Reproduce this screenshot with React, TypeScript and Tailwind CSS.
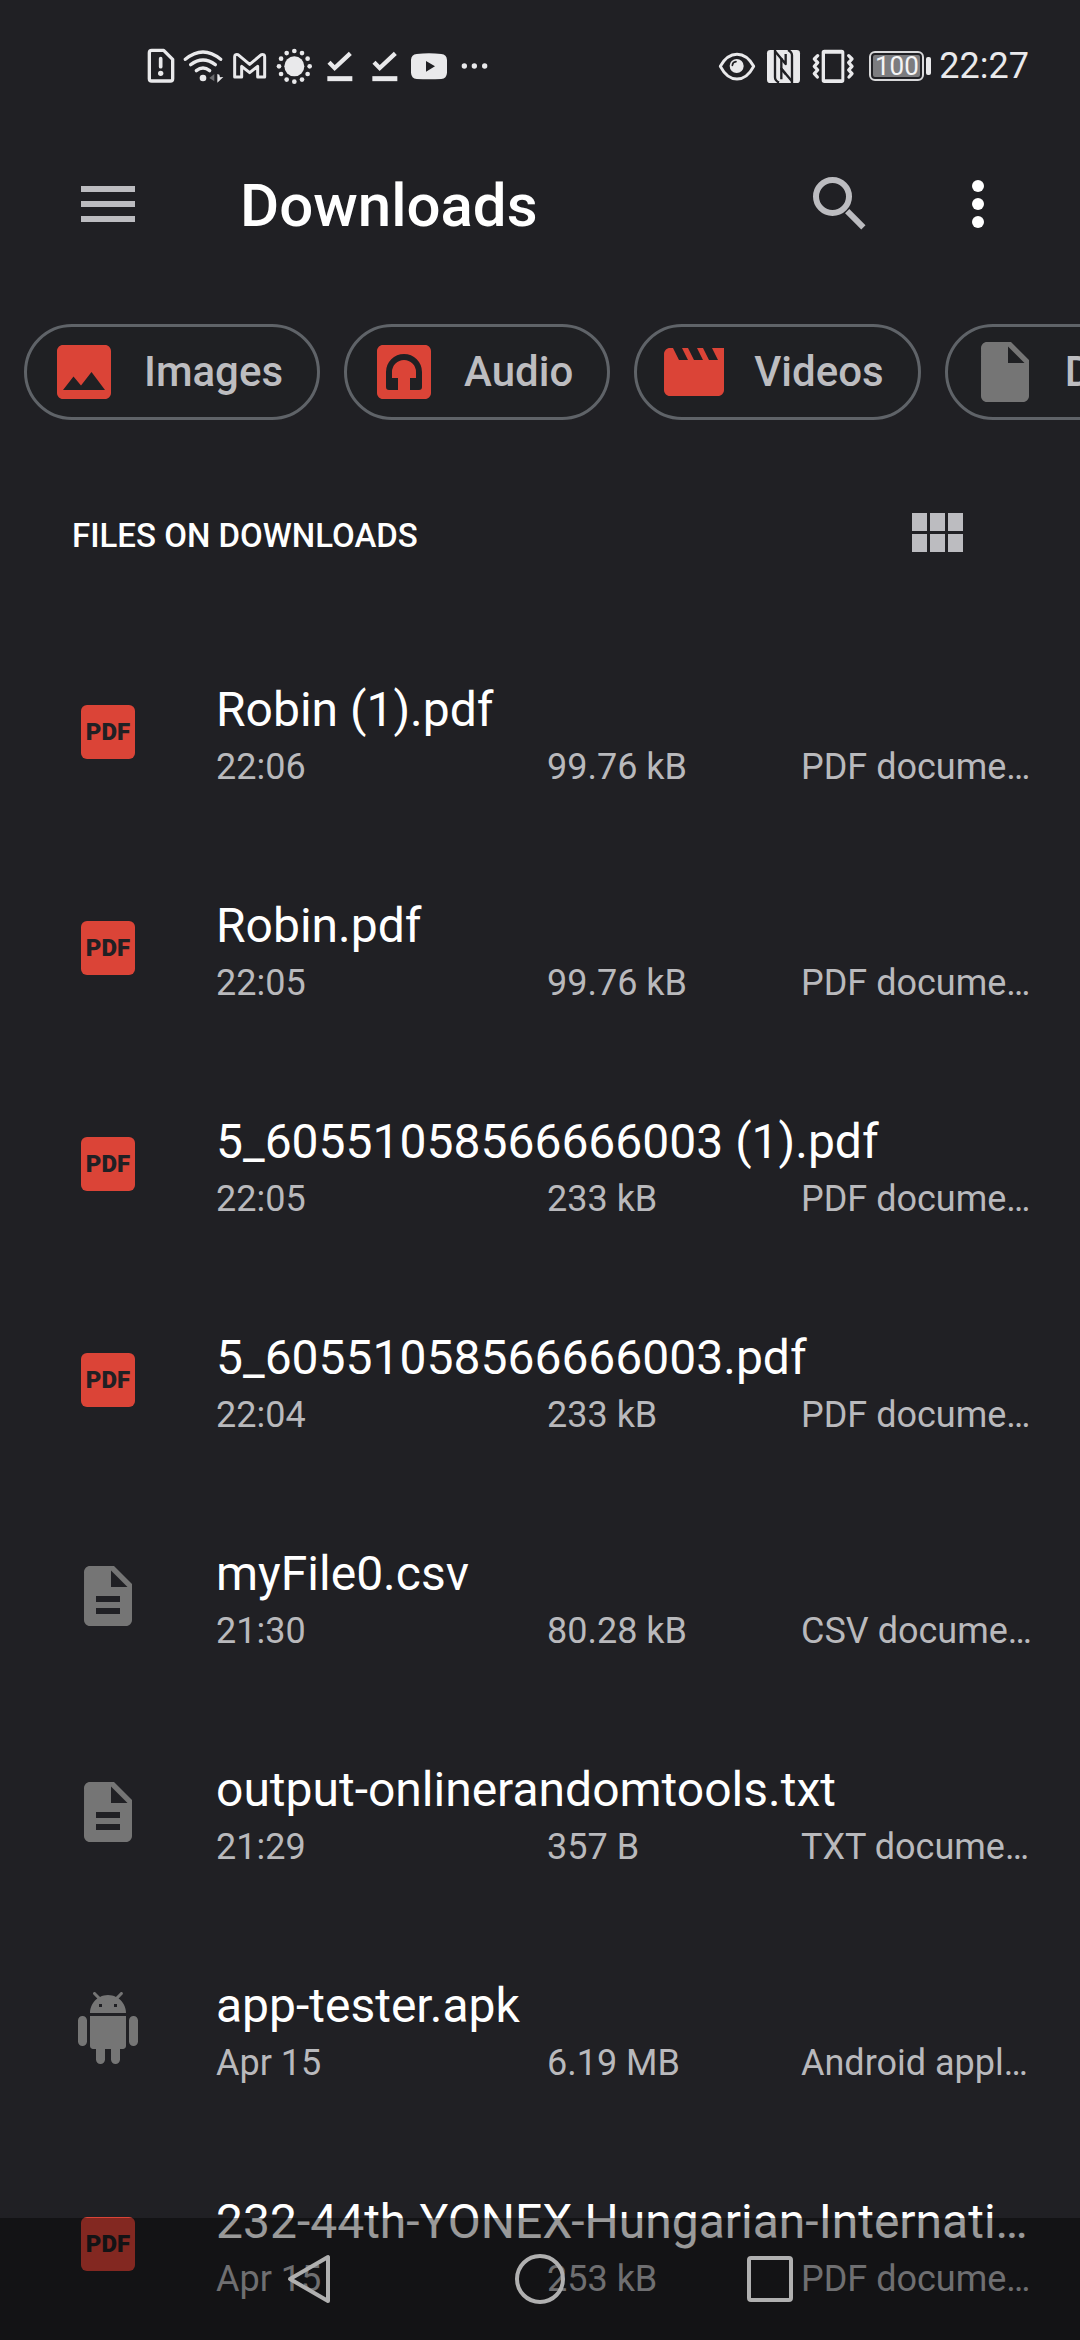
import type { ReactNode } from "react";

const PHOTO =
  "M21 19V5c0-1.1-.9-2-2-2H5c-1.1 0-2 .9-2 2v14c0 1.1.9 2 2 2h14c1.1 0 2-.9 2-2zM8.5 13.5l2.5 3.01L14.5 12l4.5 6H5l3.5-4.5z";
const AUDIO =
  "M19 3H5c-1.1 0-2 .9-2 2v14c0 1.1.9 2 2 2h14c1.1 0 2-.9 2-2V5c0-1.1-.9-2-2-2zM6 12a6 6 0 0 1 12 0v5a1 1 0 0 1-1 1h-3v-4h2v-2a4 4 0 0 0-8 0v2h2v4H7a1 1 0 0 1-1-1z";
const MOVIE =
  "M18 4l2 4h-3l-2-4h-2l2 4h-3l-2-4H8l2 4H7L5 4H4c-1.1 0-1.99.9-1.99 2L2 18c0 1.1.9 2 2 2h16c1.1 0 2-.9 2-2V4h-4z";
const FILE =
  "M6 2c-1.1 0-1.99.9-1.99 2L4 20c0 1.1.89 2 1.99 2H18c1.1 0 2-.9 2-2V8l-6-6H6zm7 7V3.5L18.5 9H13z";
const DESCRIPTION =
  "M14 2H6c-1.1 0-1.99.9-1.99 2L4 20c0 1.1.89 2 1.99 2H18c1.1 0 2-.9 2-2V8l-6-6zm2 16H8v-2h8v2zm0-4H8v-2h8v2zm-3-5V3.5L18.5 9H13z";
const ANDROID =
  "M6 18c0 .55.45 1 1 1h1v3.5c0 .83.67 1.5 1.5 1.5s1.5-.67 1.5-1.5V19h2v3.5c0 .83.67 1.5 1.5 1.5s1.5-.67 1.5-1.5V19h1c.55 0 1-.45 1-1V8H6v10zM3.5 8C2.67 8 2 8.67 2 9.5v7c0 .83.67 1.5 1.5 1.5S5 17.33 5 16.5v-7C5 8.67 4.33 8 3.5 8zm17 0c-.83 0-1.5.67-1.5 1.5v7c0 .83.67 1.5 1.5 1.5s1.5-.67 1.5-1.5v-7c0-.83-.67-1.5-1.5-1.5zm-4.97-5.84l1.3-1.3c.2-.2.2-.51 0-.71-.2-.2-.51-.2-.71 0l-1.48 1.48C13.85 1.23 12.95 1 12 1c-.96 0-1.86.23-2.66.63L7.85.15c-.2-.2-.51-.2-.71 0-.2.2-.2.51 0 .71l1.31 1.31C6.97 3.26 6 5.01 6 7h12c0-1.99-.97-3.75-2.47-4.84zM10 5H9V4h1v1zm5 0h-1V4h1v1z";
const MENU = "M3 18h18v-2H3v2zm0-5h18v-2H3v2zm0-7v2h18V6H3z";
const MODULE =
  "M4 11h5V5H4v6zm0 7h5v-6H4v6zm6 0h5v-6h-5v6zm6 0h5v-6h-5v6zm-6-7h5V5h-5v6zm6-6v6h5V5h-5z";

function Glyph({ d, className }: { d: string; className: string }) {
  return (
    <svg viewBox="0 0 24 24" className={`size-[72px] shrink-0 ${className}`} fill="currentColor" fillRule="evenodd" aria-hidden="true">
      <path d={d} />
    </svg>
  );
}

function StatusIcon({ x, children }: { x: number; children: ReactNode }) {
  return (
    <svg viewBox={`${x} 0 135 216`} className="h-[72px] w-[45px] shrink-0" fill="none" aria-hidden="true">
      {children}
    </svg>
  );
}

const SUN_DOTS = Array.from({ length: 12 }, (_, i) => {
  const a = (i * Math.PI) / 6;
  return { cx: 493 + 46 * Math.cos(a), cy: 109 + 46 * Math.sin(a) };
});

const LIGHT = "#e9e9eb";

function StatusBar() {
  return (
    <div className="flex h-[132px] shrink-0 items-center justify-between pr-[51px] pl-[138px]">
      <div className="flex items-center">
        <StatusIcon x={24}>
          <path d="M65 61H101L128 88V146q0 7-7 7H65q-7 0-7-7V68q0-7 7-7z" stroke={LIGHT} strokeWidth="10" strokeLinejoin="round" />
          <path d="M92 86V110" stroke={LIGHT} strokeWidth="11" strokeLinecap="round" />
          <circle cx="92" cy="130" r="8" fill={LIGHT} />
        </StatusIcon>
        <StatusIcon x={159}>
          <g stroke={LIGHT} strokeWidth="10" strokeLinecap="round">
            <path d="M166 88Q219 44 272 88" />
            <path d="M182 104Q219 76 256 104" />
            <path d="M199 122Q219 106 239 122" />
          </g>
          <circle cx="219" cy="144" r="10" fill={LIGHT} />
          <path d="M253 132V154L238 144z" fill="#6b6b6e" />
          <path d="M262 132V158L280 141L270 142L268 134z" fill={LIGHT} />
        </StatusIcon>
        <StatusIcon x={294}>
          <path
            d="M314 141V80Q314 72 324 74L359 103L394 74Q404 72 404 80V141H383V109L359 128L335 109V141z"
            stroke={LIGHT}
            strokeWidth="9"
            strokeLinejoin="round"
          />
        </StatusIcon>
        <StatusIcon x={429}>
          <circle cx="493" cy="109" r="30" fill={LIGHT} />
          {SUN_DOTS.map((dot, i) => (
            <circle key={i} cx={dot.cx} cy={dot.cy} r="7" fill={LIGHT} />
          ))}
        </StatusIcon>
        <StatusIcon x={564}>
          <path d="M597 97L614 114L661 70" stroke={LIGHT} strokeWidth="13" />
          <path d="M592 146H667" stroke={LIGHT} strokeWidth="15" />
        </StatusIcon>
        <StatusIcon x={699}>
          <path d="M732 97L749 114L796 70" stroke={LIGHT} strokeWidth="13" />
          <path d="M727 146H802" stroke={LIGHT} strokeWidth="15" />
        </StatusIcon>
        <StatusIcon x={834}>
          <path
            d="M860 72Q897 68 934 72Q950 74 951 90V128Q950 145 934 147Q897 149 860 147Q844 145 843 128V90Q844 74 860 72zM888 93V125L915 109z"
            fill={LIGHT}
            fillRule="evenodd"
          />
        </StatusIcon>
        <StatusIcon x={969}>
          <circle cx="1003" cy="108" r="8" fill={LIGHT} />
          <circle cx="1033" cy="108" r="8" fill={LIGHT} />
          <circle cx="1064" cy="108" r="8" fill={LIGHT} />
        </StatusIcon>
      </div>
      <div className="flex items-center">
        <StatusIcon x={42}>
          <path d="M58 109Q78 73 108 73Q138 73 158 109Q138 147 108 147Q78 147 58 109z" stroke={LIGHT} strokeWidth="9" strokeLinejoin="round" />
          <circle cx="107" cy="108" r="21" fill={LIGHT} />
          <path d="M94 106Q95 96 105 95" stroke="#202024" strokeWidth="5" strokeLinecap="round" />
        </StatusIcon>
        <StatusIcon x={177}>
          <rect x="198" y="60" width="99" height="99" rx="10" fill={LIGHT} />
          <g stroke="#202024" strokeWidth="7" strokeLinejoin="round">
            <path d="M222 60V142Q222 152 234 158" />
            <path d="M273 159V76Q273 66 261 60" />
            <path d="M222 64L254 102V72" />
            <path d="M273 154L241 116V148" />
            <path d="M241 84V116L254 132" />
          </g>
        </StatusIcon>
        <svg viewBox="312 0 171 216" className="h-[72px] w-[57px] shrink-0" fill="none" aria-hidden="true">
          <path d="M370 59h52q8 0 8 8v84q0 8-8 8h-52q-8 0-8-8V67q0-8 8-8zM372 71v77h49V71z" fill={LIGHT} fillRule="evenodd" />
          <g stroke={LIGHT} strokeWidth="10" strokeLinejoin="round" strokeLinecap="round">
            <path d="M350 77L340 87L350 98L340 109L350 120L340 131L349 141" />
            <path d="M443 77L453 87L443 98L453 109L443 120L453 131L444 141" />
          </g>
        </svg>
        <div className="flex w-[75px] items-center gap-[2px] pl-[7px]">
          <div className="h-[30px] w-[55px] rounded-[6px] border-2 border-[#d8d8da] p-[2px]">
            <div className="flex h-full items-center justify-center rounded-[2px] bg-[#7c7c7f] text-[26px] leading-none text-[#f4f4f5]">100</div>
          </div>
          <div className="h-[18px] w-[5px] rounded-[2px] bg-[#e9e9eb]" />
        </div>
        <time className="pl-[2px] text-[36px] leading-[42px] text-[#e9e9eb]">22:27</time>
      </div>
    </div>
  );
}

function TopBar() {
  return (
    <header className="flex h-36 shrink-0 items-center px-[66px]">
      <button type="button" aria-label="Open navigation" className="ml-[6px] text-[#bcbcc0]">
        <Glyph d={MENU} className="" />
      </button>
      <h1 className="ml-24 flex-1 pt-1 text-[60px] leading-[72px] font-medium text-white">Downloads</h1>
      <button type="button" aria-label="Search" className="text-[#bcbcc0]">
        <svg viewBox="0 0 24 24" className="size-[72px]" fill="none" stroke="currentColor" strokeWidth="2" aria-hidden="true">
          <circle cx="9.5" cy="9.5" r="5.5" />
          <path d="M14.4 14.4L19.8 19.8" />
        </svg>
      </button>
      <button type="button" aria-label="More options" className="ml-[66px] text-white">
        <svg viewBox="0 0 24 24" className="size-[72px]" fill="currentColor" aria-hidden="true">
          <circle cx="12" cy="6" r="2" />
          <circle cx="12" cy="12" r="2" />
          <circle cx="12" cy="18" r="2" />
        </svg>
      </button>
    </header>
  );
}

const CHIPS = [
  { label: "Images", icon: PHOTO, tone: "text-[#db4437]" },
  { label: "Audio", icon: AUDIO, tone: "text-[#db4437]" },
  { label: "Videos", icon: MOVIE, tone: "text-[#db4437]" },
  { label: "Documents", icon: FILE, tone: "text-[#757575]" },
];

function Chips() {
  return (
    <div className="mt-12 flex shrink-0 gap-6 overflow-hidden pl-6">
      {CHIPS.map((chip) => (
        <button
          key={chip.label}
          type="button"
          className="flex h-24 shrink-0 items-center gap-6 rounded-full border-[3px] border-[#5f6368] bg-[#1f2023] pr-[34px] pl-[21px]"
        >
          <Glyph d={chip.icon} className={chip.tone} />
          <span className="text-[42px] leading-[48px] font-medium text-[#bdbdc0]">{chip.label}</span>
        </button>
      ))}
    </div>
  );
}

type Kind = "pdf" | "text" | "apk";

const FILES: { name: string; date: string; size: string; type: string; kind: Kind }[] = [
  { name: "Robin (1).pdf", date: "22:06", size: "99.76 kB", type: "PDF document", kind: "pdf" },
  { name: "Robin.pdf", date: "22:05", size: "99.76 kB", type: "PDF document", kind: "pdf" },
  { name: "5_60551058566666003 (1).pdf", date: "22:05", size: "233 kB", type: "PDF document", kind: "pdf" },
  { name: "5_60551058566666003.pdf", date: "22:04", size: "233 kB", type: "PDF document", kind: "pdf" },
  { name: "myFile0.csv", date: "21:30", size: "80.28 kB", type: "CSV document", kind: "text" },
  { name: "output-onlinerandomtools.txt", date: "21:29", size: "357 B", type: "TXT document", kind: "text" },
  { name: "app-tester.apk", date: "Apr 15", size: "6.19 MB", type: "Android application", kind: "apk" },
  { name: "232-44th-YONEX-Hungarian-International.pdf", date: "Apr 15", size: "253 kB", type: "PDF document", kind: "pdf" },
];

function FileIcon({ kind }: { kind: Kind }) {
  if (kind === "pdf") {
    return (
      <div className="flex size-[54px] items-center justify-center rounded-[6px] bg-[#db4437] text-[24px] leading-none font-black text-[#202024]">
        PDF
      </div>
    );
  }
  return <Glyph d={kind === "apk" ? ANDROID : DESCRIPTION} className="text-[#757575]" />;
}

function FileList() {
  return (
    <ul className="mt-[54px] min-h-0 flex-1 overflow-hidden">
      {FILES.map((file) => (
        <li key={file.name} className="flex h-[216px] items-center pr-12">
          <div className="flex w-[216px] shrink-0 justify-center">
            <FileIcon kind={file.kind} />
          </div>
          <div className="min-w-0 flex-1 pt-[6px]">
            <div className="truncate text-[48px] leading-[56px] text-white">{file.name}</div>
            <div className="mt-2 grid grid-cols-[331fr_254fr_231fr] text-[36px] leading-[42px] text-[#b9b9bc]">
              <span className="truncate">{file.date}</span>
              <span className="truncate">{file.size}</span>
              <span className="truncate">{file.type}</span>
            </div>
          </div>
        </li>
      ))}
    </ul>
  );
}

function NavBar() {
  return (
    <nav className="fixed inset-x-0 bottom-0 flex h-[122px] items-center justify-center bg-black/40 text-[#b0b0b0]">
      <button type="button" aria-label="Back" className="flex w-[230px] justify-center">
        <svg viewBox="0 0 54 54" className="size-[54px]" fill="none" stroke="currentColor" strokeWidth="4" strokeLinejoin="round" aria-hidden="true">
          <path d="M7 27L45 5V49z" />
        </svg>
      </button>
      <button type="button" aria-label="Home" className="flex w-[230px] justify-center">
        <svg viewBox="0 0 54 54" className="size-[54px]" fill="none" stroke="currentColor" strokeWidth="4" aria-hidden="true">
          <circle cx="27" cy="27" r="23" />
        </svg>
      </button>
      <button type="button" aria-label="Recent apps" className="flex w-[230px] justify-center">
        <svg viewBox="0 0 54 54" className="size-[54px]" fill="none" stroke="currentColor" strokeWidth="4" aria-hidden="true">
          <rect x="6" y="6" width="42" height="42" rx="2" />
        </svg>
      </button>
    </nav>
  );
}

export default function App() {
  return (
    <div className="flex h-screen flex-col overflow-hidden bg-[#202024] font-['Roboto',sans-serif]">
      <StatusBar />
      <TopBar />
      <Chips />
      <div className="mt-[78px] flex h-[72px] shrink-0 items-center justify-between pr-[108px] pl-[72px]">
        <h2 className="pt-1 text-[33px] leading-[40px] font-medium text-white">FILES ON DOWNLOADS</h2>
        <button type="button" aria-label="Grid view" className="text-[#bcbcc0]">
          <Glyph d={MODULE} className="" />
        </button>
      </div>
      <FileList />
      <NavBar />
    </div>
  );
}
